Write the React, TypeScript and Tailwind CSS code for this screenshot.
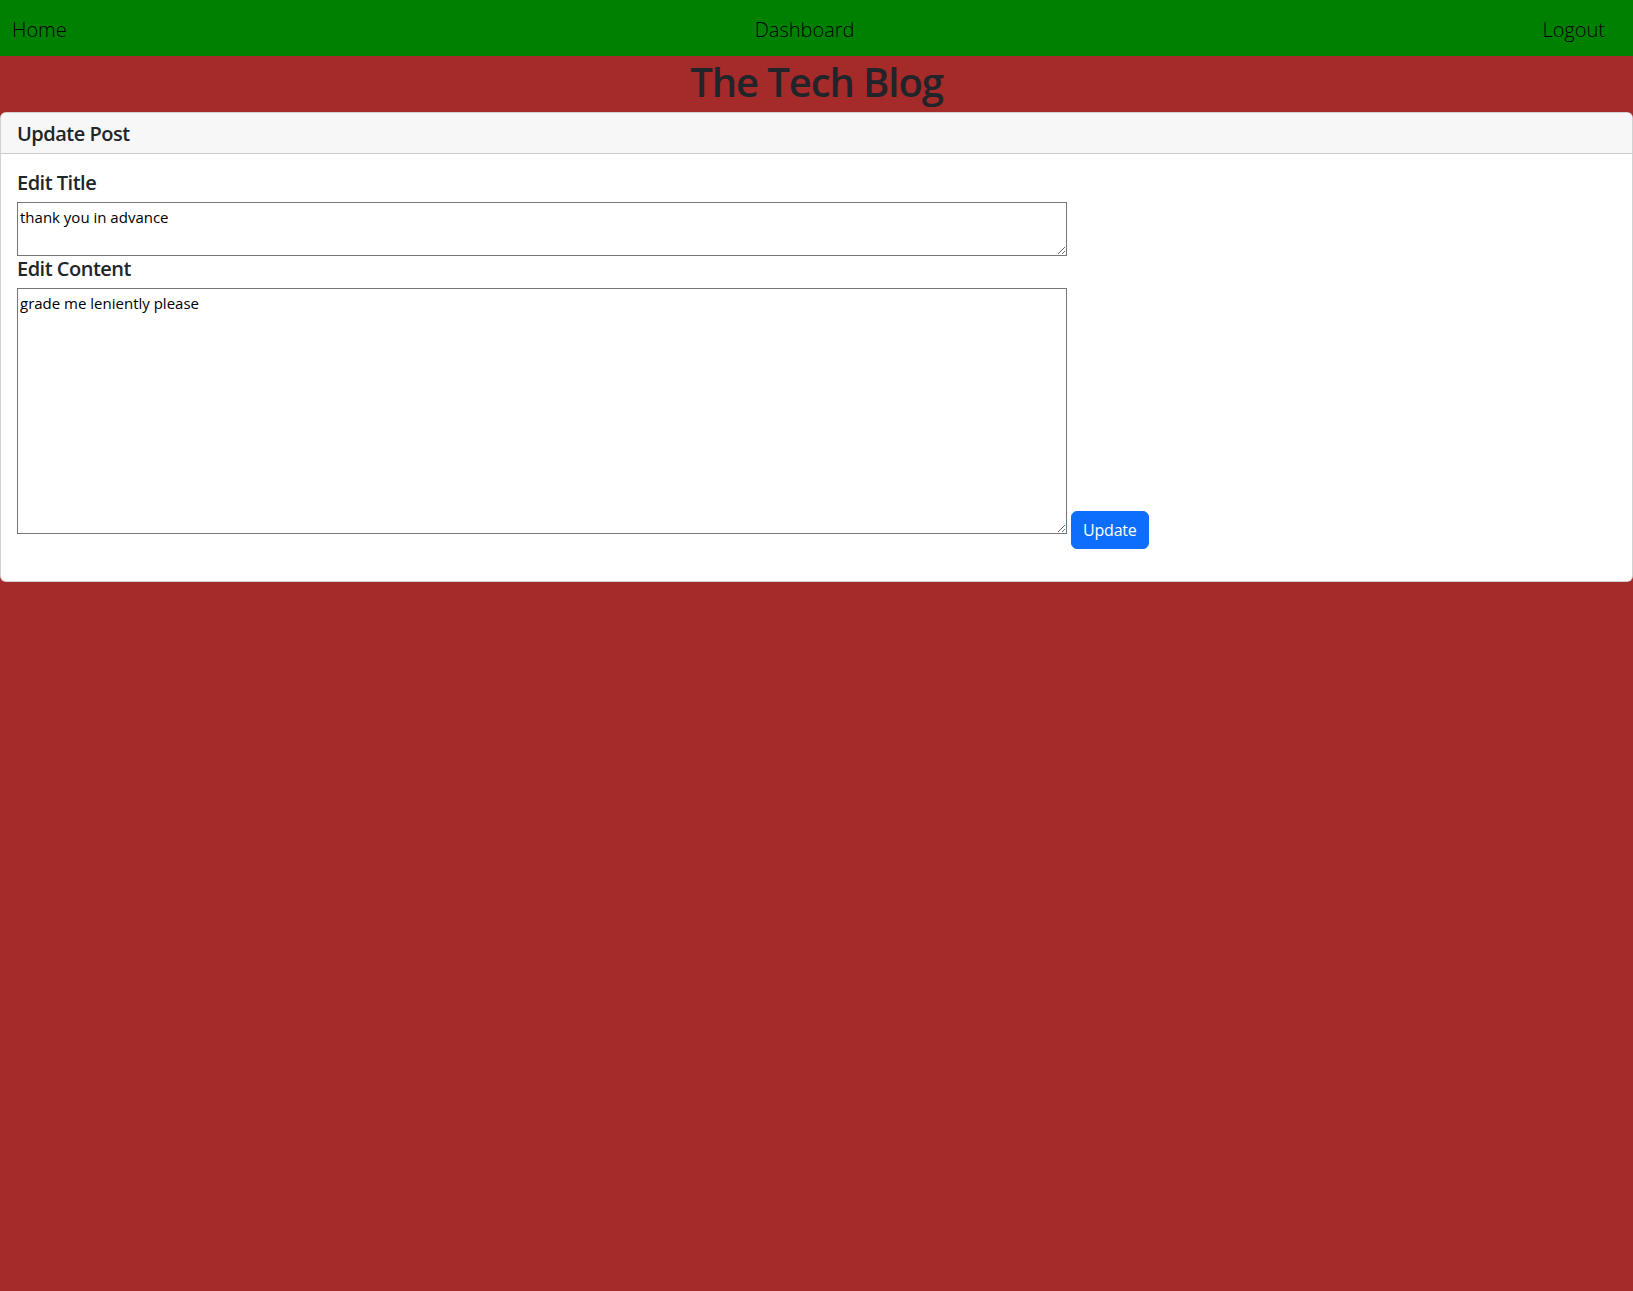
import React from "react";

const font = { fontFamily: '"Open Sans", "Noto Sans", Arial, sans-serif' };

export default function App() {
  return (
    <div
      className="min-h-[1291px] bg-[#a52a2a] text-[#212529] text-[16px] leading-[24px]"
      style={font}
    >
      <nav className="flex h-[56px] items-center justify-between bg-[#008000] pt-[3px] pl-[12px] pr-[28px] text-[20px] font-light leading-[30px] text-black">
        <a>Home</a>
        <a>Dashboard</a>
        <a>Logout</a>
      </nav>
      <h1 className="mb-[6px] pt-[2px] text-center text-[40px] font-semibold leading-[48px] tracking-[-1.1px]">
        The Tech Blog
      </h1>
      <div className="rounded-[6px] border border-black/[0.175] bg-white">
        <div className="rounded-t-[5px] border-b border-black/[0.175] bg-[#f7f7f7] px-[16px] pt-[9px] pb-[7px]">
          <h5 className="text-[20px] font-semibold leading-[24px] tracking-[-0.5px]">Update Post</h5>
        </div>
        <div className="p-[16px]">
          <h5 className="mb-[7px] pt-[1px] text-[20px] font-semibold leading-[24px] tracking-[-0.5px]">Edit Title</h5>
          <textarea
            rows={2}
            defaultValue="thank you in advance"
            className="block h-[54px] w-[1050px] border border-[#767676] px-[2px] py-[2px] text-[15px] leading-[24px] text-black outline-none"
          />
          <h5 className="mt-[1px] mb-[7px] text-[20px] font-semibold leading-[24px] tracking-[-0.5px]">Edit Content</h5>
          <div className="mb-[16px] flex items-start gap-[4px]">
            <textarea
              rows={10}
              defaultValue="grade me leniently please"
              className="block h-[246px] w-[1050px] border border-[#767676] px-[2px] py-[2px] text-[15px] leading-[24px] text-black outline-none"
            />
            <button className="mt-[223px] h-[38px] rounded-[6px] border border-[#0d6efd] bg-[#0d6efd] px-[11px] text-[16px] leading-[24px] text-white tracking-[-0.2px]">
              Update
            </button>
          </div>
        </div>
      </div>
    </div>
  );
}
